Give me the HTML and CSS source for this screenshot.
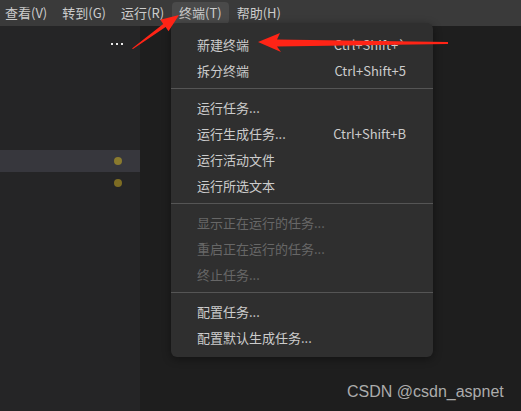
FILE: index.html
```html
<!DOCTYPE html>
<html lang="zh-CN">
<head>
<meta charset="utf-8">
<title>Terminal menu</title>
<link rel="stylesheet" href="styles.css">
</head>
<body>
<div class="app">
  <nav class="menubar">
    <span class="mb-item">查看(V)</span>
    <span class="mb-item">转到(G)</span>
    <span class="mb-item">运行(R)</span>
    <span class="mb-item active">终端(T)</span>
    <span class="mb-item">帮助(H)</span>
  </nav>
  <div class="workspace">
    <aside class="sidebar">
      <div class="side-header">
        <span class="more"><i></i><i></i><i></i></span>
      </div>
      <ul class="side-list">
        <li class="side-row selected"><span class="dot"></span></li>
        <li class="side-row"><span class="dot"></span></li>
      </ul>
    </aside>
    <main class="editor"></main>
  </div>

  <div class="menu">
    <div class="mi"><span>新建终端</span><span class="key">Ctrl+Shift+`</span></div>
    <div class="mi"><span>拆分终端</span><span class="key">Ctrl+Shift+5</span></div>
    <div class="sep"></div>
    <div class="mi"><span>运行任务...</span></div>
    <div class="mi"><span>运行生成任务...</span><span class="key">Ctrl+Shift+B</span></div>
    <div class="mi"><span>运行活动文件</span></div>
    <div class="mi"><span>运行所选文本</span></div>
    <div class="sep"></div>
    <div class="mi disabled"><span>显示正在运行的任务...</span></div>
    <div class="mi disabled"><span>重启正在运行的任务...</span></div>
    <div class="mi disabled"><span>终止任务...</span></div>
    <div class="sep"></div>
    <div class="mi"><span>配置任务...</span></div>
    <div class="mi"><span>配置默认生成任务...</span></div>
  </div>

  <svg class="arrows" width="521" height="411" viewBox="0 0 521 411">
    <polygon fill="#ff2416" points="132,48.5 163.2,23.9 160.3,19.8 179,15 168.5,31.2 165.6,27.1 133,49"/>
    <polygon fill="#ff2416" points="258,42 280,33 277,39.5 448,42 448,44 277,46.5 281,52"/>
  </svg>

  <div class="watermark">CSDN @csdn_aspnet</div>
</div>
</body>
</html>
```

FILE: styles.css
```css
* { box-sizing: border-box; }
html, body { margin: 0; padding: 0; }
body {
  width: 521px;
  height: 411px;
  overflow: hidden;
  background: #1e1e1e;
  font-family: "Noto Sans CJK SC", "Noto Sans", sans-serif;
  font-size: 13px;
  color: #cccccc;
}
.app {
  position: relative;
  width: 521px;
  height: 411px;
  display: flex;
  flex-direction: column;
}
.menubar {
  height: 26px;
  flex: none;
  background: #3a3a3a;
  display: flex;
  align-items: center;
  margin-left: -2.5px;
}
.mb-item {
  height: 22px;
  line-height: 22px;
  padding: 0 7.5px;
  border-radius: 4px;
  white-space: nowrap;
  color: #cccccc;
}
.mb-item.active {
  background: #4a4a4a;
}
.workspace {
  flex: 1;
  display: flex;
}
.sidebar {
  width: 140px;
  flex: none;
  background: #252526;
  display: flex;
  flex-direction: column;
}
.side-header {
  height: 36px;
  display: flex;
  align-items: center;
  justify-content: flex-end;
  padding-right: 17px;
}
.more {
  display: flex;
  gap: 3px;
}
.more i {
  width: 2px;
  height: 2px;
  background: #e8e8e8;
  display: block;
}
.side-list {
  list-style: none;
  margin: 88px 0 0;
  padding: 0;
}
.side-row {
  height: 22px;
  display: flex;
  align-items: center;
  justify-content: flex-end;
  padding-right: 18px;
}
.side-row.selected { background: #37373d; }
.dot {
  width: 8px;
  height: 8px;
  border-radius: 50%;
  background: #7d6c23;
}
.selected .dot { background: #8a7a2e; }
.editor {
  flex: 1;
  background: #1e1e1e;
}
.menu {
  position: absolute;
  left: 171px;
  top: 23px;
  width: 262px;
  padding: 8px 0 7px;
  background: #2f2f2f;
  border-radius: 6px;
  box-shadow: 0 2px 8px rgba(0, 0, 0, 0.4);
}
.mi {
  height: 26px;
  display: flex;
  align-items: center;
  justify-content: space-between;
  padding: 0 27px 0 26px;
  color: #cccccc;
  white-space: nowrap;
}
.mi.disabled { color: #676767; }
.key { color: #cccccc; }
.sep {
  height: 1px;
  margin: 5px 0;
  background: #555555;
}
.arrows {
  position: absolute;
  left: 0;
  top: 0;
  pointer-events: none;
}
.watermark {
  position: absolute;
  left: 347px;
  top: 383px;
  font-family: "Liberation Sans", Arial, sans-serif;
  font-size: 16px;
  line-height: 18px;
  color: #acacac;
}
```
